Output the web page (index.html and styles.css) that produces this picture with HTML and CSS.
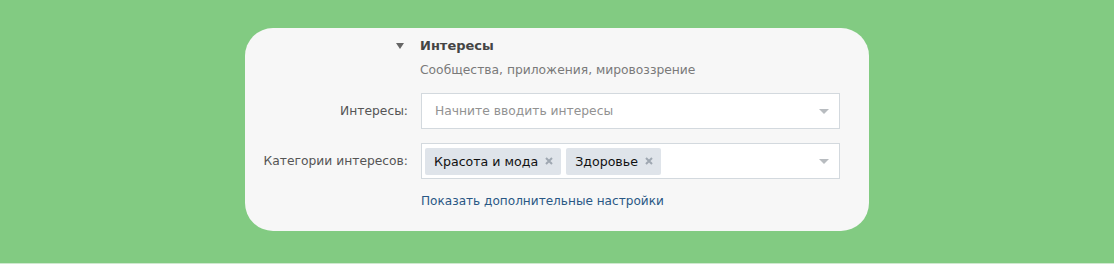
FILE: index.html
```html
<!DOCTYPE html>
<html lang="ru">
<head>
<meta charset="utf-8">
<link rel="stylesheet" href="styles.css">
</head>
<body>
<div class="page">
  <div class="card">
    <div class="row head">
      <div class="label"><span class="tri"></span></div>
      <div class="field">
        <div class="title">Интересы</div>
        <div class="subtitle">Сообщества, приложения, мировоззрение</div>
      </div>
    </div>
    <div class="row">
      <div class="label">Интересы:</div>
      <div class="field">
        <div class="input">
          <span class="placeholder">Начните вводить интересы</span>
          <span class="arrow"></span>
        </div>
      </div>
    </div>
    <div class="row">
      <div class="label">Категории интересов:</div>
      <div class="field">
        <div class="input tags">
          <span class="tag"><span>Красота и мода</span><svg class="x" viewBox="0 0 8 8" width="8" height="8"><path d="M1 1L7 7M7 1L1 7" stroke="#9ea7b1" stroke-width="2" stroke-linecap="butt"/></svg></span>
          <span class="tag"><span>Здоровье</span><svg class="x" viewBox="0 0 8 8" width="8" height="8"><path d="M1 1L7 7M7 1L1 7" stroke="#9ea7b1" stroke-width="2" stroke-linecap="butt"/></svg></span>
          <span class="arrow"></span>
        </div>
      </div>
    </div>
    <div class="row">
      <div class="label"></div>
      <div class="field"><a class="link">Показать дополнительные настройки</a></div>
    </div>
  </div>
</div>
</body>
</html>
```

FILE: styles.css
```css
html, body {
  margin: 0;
  padding: 0;
}
body {
  background: #82cb82;
  font-family: "DejaVu Sans", Verdana, sans-serif;
  font-size: 12.3px;
}
.page {
  border-bottom: 1px solid #cfe9cf;
  padding: 28px 0 0 245px;
  box-sizing: border-box;
  height: 264px;
}
.card {
  width: 624px;
  height: 203px;
  box-sizing: border-box;
  background: #f7f7f7;
  border-radius: 28px;
  padding-top: 9px;
  display: flex;
  flex-direction: column;
}
.row {
  display: grid;
  grid-template-columns: 163px 419px;
  column-gap: 13px;
  align-items: center;
}
.row + .row {
  margin-top: 14px;
}
.head {
  align-items: start;
}
.head + .row {
  margin-top: 15px;
}
.label {
  text-align: right;
  color: #555;
}
.tri {
  display: inline-block;
  margin-top: 6px;
  margin-right: 4px;
  width: 0;
  height: 0;
  border-left: 4px solid transparent;
  border-right: 4px solid transparent;
  border-top: 6px solid #666;
}
.title {
  font-weight: bold;
  font-size: 13px;
  color: #444;
  line-height: 18px;
  margin-left: -1px;
}
.subtitle {
  color: #7a7a7a;
  line-height: 16px;
  margin-top: 7px;
  margin-left: -1px;
}
.input {
  height: 36px;
  box-sizing: border-box;
  border: 1px solid #d3d9de;
  background: #fff;
  display: flex;
  align-items: center;
  padding-left: 13px;
}
.placeholder {
  color: #929292;
}
.arrow {
  margin-left: auto;
  margin-right: 10px;
  width: 0;
  height: 0;
  border-left: 5px solid transparent;
  border-right: 5px solid transparent;
  border-top: 5px solid #b8bcc0;
}
.tags {
  padding-left: 3px;
  gap: 5px;
}
.tag {
  background: #dfe4ea;
  border-radius: 2px;
  height: 27px;
  display: flex;
  align-items: center;
  padding: 0 8px 0 9px;
  color: #111;
  font-size: 12.6px;
  gap: 7px;
}
.x {
  display: block;
}
.link {
  color: #2a5885;
  font-size: 12.1px;
  line-height: 16px;
}
```
